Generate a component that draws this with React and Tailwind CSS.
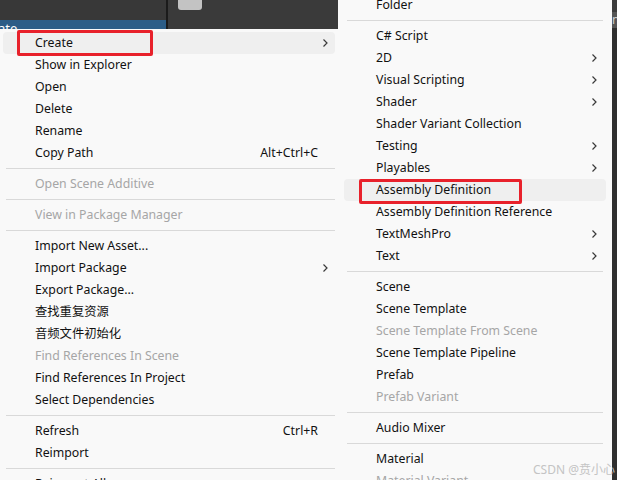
import React from "react";

const leftItems = [
  { t: "Create", arrow: true, hl: true, red: true },
  { t: "Show in Explorer" },
  { t: "Open" },
  { t: "Delete" },
  { t: "Rename" },
  { t: "Copy Path", sc: "Alt+Ctrl+C" },
  "sep",
  { t: "Open Scene Additive", dis: true },
  "sep",
  { t: "View in Package Manager", dis: true },
  "sep",
  { t: "Import New Asset..." },
  { t: "Import Package", arrow: true },
  { t: "Export Package..." },
  { t: "查找重复资源" },
  { t: "音频文件初始化" },
  { t: "Find References In Scene", dis: true },
  { t: "Find References In Project" },
  { t: "Select Dependencies" },
  "sep",
  { t: "Refresh", sc: "Ctrl+R" },
  { t: "Reimport" },
  "sep",
  { t: "Reimport All" },
];

const rightItems = [
  { t: "Folder" },
  "sep",
  { t: "C# Script" },
  { t: "2D", arrow: true },
  { t: "Visual Scripting", arrow: true },
  { t: "Shader", arrow: true },
  { t: "Shader Variant Collection" },
  { t: "Testing", arrow: true },
  { t: "Playables", arrow: true },
  { t: "Assembly Definition", hl: true, red: true },
  { t: "Assembly Definition Reference" },
  { t: "TextMeshPro", arrow: true },
  { t: "Text", arrow: true },
  "sep",
  { t: "Scene" },
  { t: "Scene Template" },
  { t: "Scene Template From Scene", dis: true },
  { t: "Scene Template Pipeline" },
  { t: "Prefab" },
  { t: "Prefab Variant", dis: true },
  "sep",
  { t: "Audio Mixer" },
  "sep",
  { t: "Material" },
  { t: "Material Variant", dis: true },
];

function Chevron() {
  return (
    <svg width="8" height="10" viewBox="0 0 8 10" className="shrink-0">
      <path d="M2.5 1.5 L6 5 L2.5 8.5" fill="none" stroke="#3a3a3a" strokeWidth="1.2" />
    </svg>
  );
}

function Row({ item, side }) {
  const left = side === "left";
  return (
    <div
      className={
        "relative flex items-center h-[22px] rounded-[4px] " +
        (left ? "mx-[3px] pl-[32px] pr-[6px] " : "mx-[6px] pl-[32px] pr-[8px] ") +
        (item.hl ? "bg-[#efefef]" : "")
      }
    >
      <span className={"whitespace-nowrap " + (item.dis ? "text-[#a6a6a6]" : "text-[#111111]")}>{item.t}</span>
      <span className="flex-1" />
      {item.sc && <span className="whitespace-nowrap text-[#111111]">{item.sc}</span>}
      <span className="w-[8px] ml-[3px] flex items-center">{item.arrow && <Chevron />}</span>
      {item.red && (
        <span
          className={
            "absolute border-[3px] border-[#e8212b] rounded-[2px] " +
            (left ? "left-[14px] -top-[2px] w-[136px] h-[26px]" : "left-[15px] top-0 w-[163px] h-[25px]")
          }
        />
      )}
    </div>
  );
}

function Sep({ side }) {
  return (
    <div
      className={"h-px my-[4px] bg-[#d9d9d9] " + (side === "left" ? "ml-[6px] mr-[3px]" : "mx-[9px]")}
    />
  );
}

export default function App() {
  return (
    <div className="relative w-[617px] h-[480px] overflow-hidden bg-[#393939] font-['Noto_Sans','Noto_Sans_CJK_SC',sans-serif] text-[12.3px]">
      <div className="flex items-start">
        {/* left column: editor strip + context menu */}
        <div className="w-[338px] shrink-0">
          <div className="flex h-[29px]">
            <div className="w-[166px] flex flex-col">
              <div className="flex-1 bg-[#383838]" />
              <div className="h-[9px] bg-[#2c5d87] overflow-hidden">
                <div className="-ml-[2px] pt-[1px] text-white text-[13px] leading-[14px]">ate</div>
              </div>
            </div>
            <div className="w-[2px] bg-[#1b1b1b]" />
            <div className="flex-1 bg-[#3a3a3a] pl-[10px]">
              <div className="w-[24px] h-[10px] bg-[#c3c3c3] rounded-b-[3px]" />
            </div>
          </div>
          <div className="bg-[#f9f9f9] pt-[3px] h-[460px]">
            {leftItems.map((it, i) =>
              it === "sep" ? <Sep key={i} side="left" /> : <Row key={i} item={it} side="left" />
            )}
          </div>
        </div>

        {/* right submenu */}
        <div className="w-[274px] shrink-0 -mt-[6px] bg-[#f9f9f9] h-[500px]">
          {rightItems.map((it, i) =>
            it === "sep" ? <Sep key={i} side="right" /> : <Row key={i} item={it} side="right" />
          )}
        </div>

        {/* editor edge on the right */}
        <div className="w-[5px] shrink-0 flex flex-col">
          <div className="h-[12px] bg-[#3c3c3c]" />
          <div className="h-[16px] bg-[#555555] text-[#d0d0d0] text-[12px] leading-[16px] overflow-hidden">n</div>
          <div className="h-[460px] bg-[#2f2f2f]" />
        </div>
      </div>

      <div className="absolute left-[533px] top-[461px] whitespace-nowrap text-[12px] text-[#c4c4c4]">
        CSDN @贲小心
      </div>
    </div>
  );
}
